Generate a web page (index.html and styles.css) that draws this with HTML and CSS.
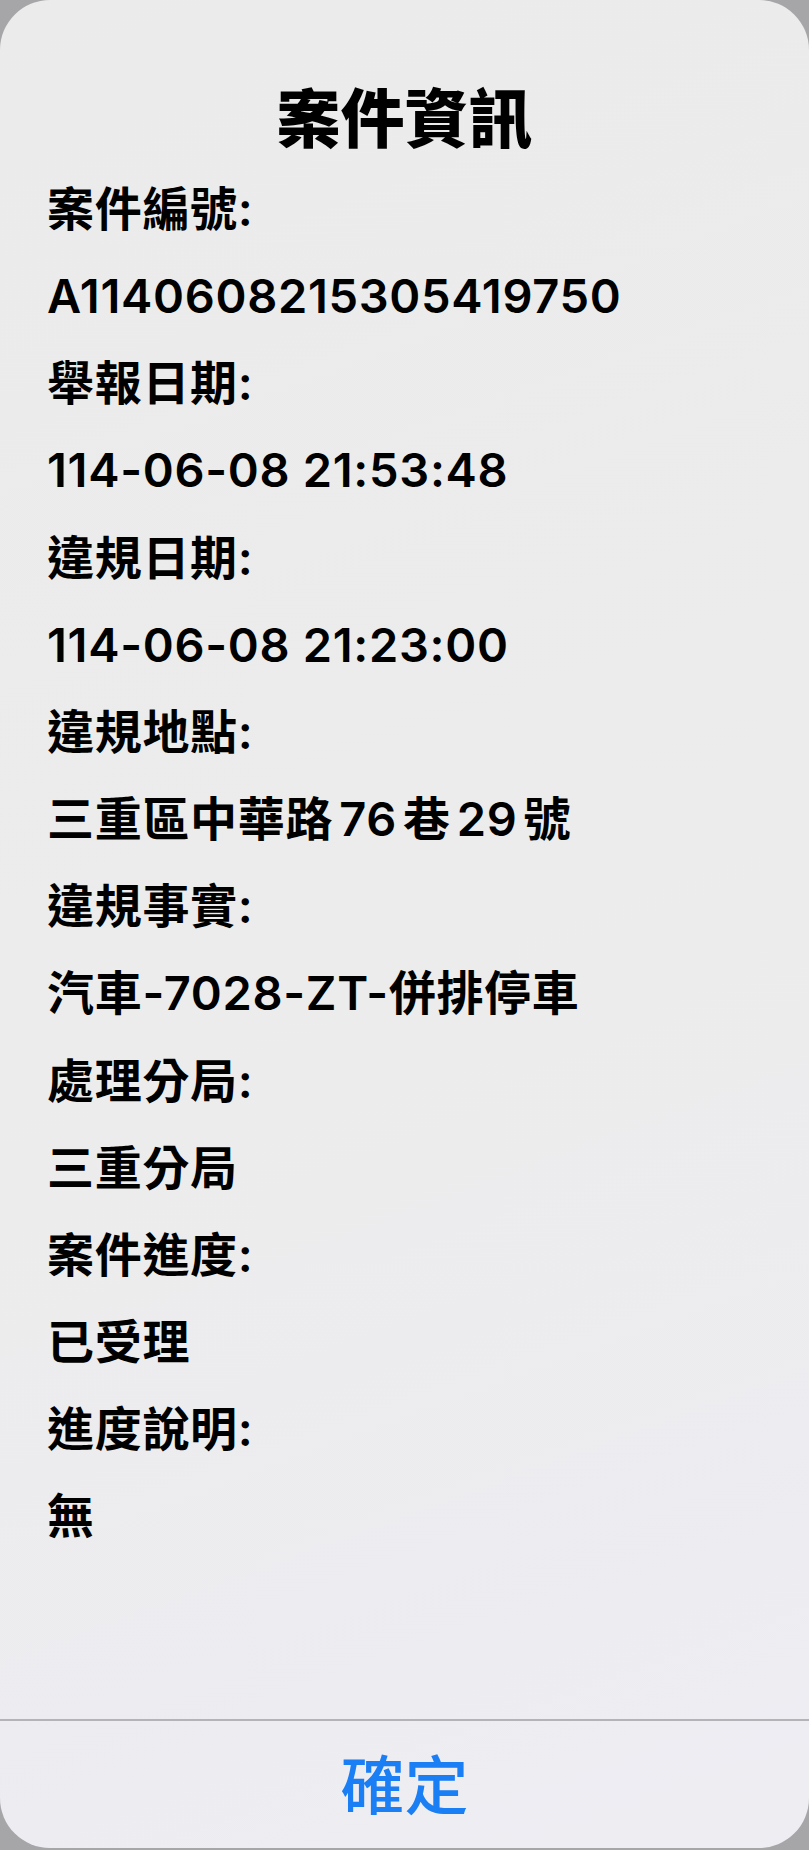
FILE: index.html
```html
<!DOCTYPE html>
<html lang="zh-Hant">
  <head>
    <meta charset="UTF-8" />
    <meta name="viewport" content="width=device-width, initial-scale=1.0" />
    <title>案件資訊</title>
    <link rel="stylesheet" href="styles.css">
  </head>
  <body>
    <!-- Alert dialog -->
    <div class="alert">
      <div class="alert-body">
        <h1 class="alert-title">案件資訊</h1>

        <div class="info-list">
          <p class="info-row">案件編號:</p>
          <p class="info-row">A1140608215305419750</p>
          <p class="info-row">舉報日期:</p>
          <p class="info-row">114-06-08 21:53:48</p>
          <p class="info-row">違規日期:</p>
          <p class="info-row">114-06-08 21:23:00</p>
          <p class="info-row">違規地點:</p>
          <p class="info-row">三重區中華路<span class="gap">76</span>巷<span class="gap">29</span>號</p>
          <p class="info-row">違規事實:</p>
          <p class="info-row">汽車-7028-ZT-併排停車</p>
          <p class="info-row">處理分局:</p>
          <p class="info-row">三重分局</p>
          <p class="info-row">案件進度:</p>
          <p class="info-row">已受理</p>
          <p class="info-row">進度說明:</p>
          <p class="info-row">無</p>
        </div>
      </div>

      <div class="alert-actions">
        <button class="alert-button">確定</button>
      </div>
    </div>
  </body>
</html>
```

FILE: styles.css
```css
body {
  margin: 0;
  background-color: #a6a6a8;
  font-family: Inter, "Noto Sans CJK TC", sans-serif;
  color: #000;
}

.alert {
  display: flex;
  flex-direction: column;
  height: 1848px;
  border-radius: 50px;
  background: linear-gradient(160deg, #ebebeb 0%, #ececec 50%, #ededf3 100%);
  overflow: hidden;
}

.alert-body {
  flex: 1;
  padding: 74px 47px 0;
}

.alert-title {
  margin: 0;
  font-family: "Noto Sans CJK TC", sans-serif;
  font-size: 64px;
  font-weight: 900;
  line-height: 80px;
  text-align: center;
}

.info-list {
  margin-top: 11px;
}

.info-row {
  margin: 0;
  font-size: 47px;
  font-weight: 600;
  line-height: 87.15px;
  letter-spacing: 0.7px;
  white-space: nowrap;
}

.gap {
  margin: 0 6px;
}

.alert-actions {
  border-top: 2px solid #b4b4b8;
  height: 127px;
  display: flex;
}

.alert-button {
  flex: 1;
  background: none;
  border: none;
  padding: 0 0 8px;
  font-family: "Noto Sans CJK TC", sans-serif;
  font-size: 64px;
  font-weight: 500;
  color: #1a7ef5;
  cursor: pointer;
}
```
